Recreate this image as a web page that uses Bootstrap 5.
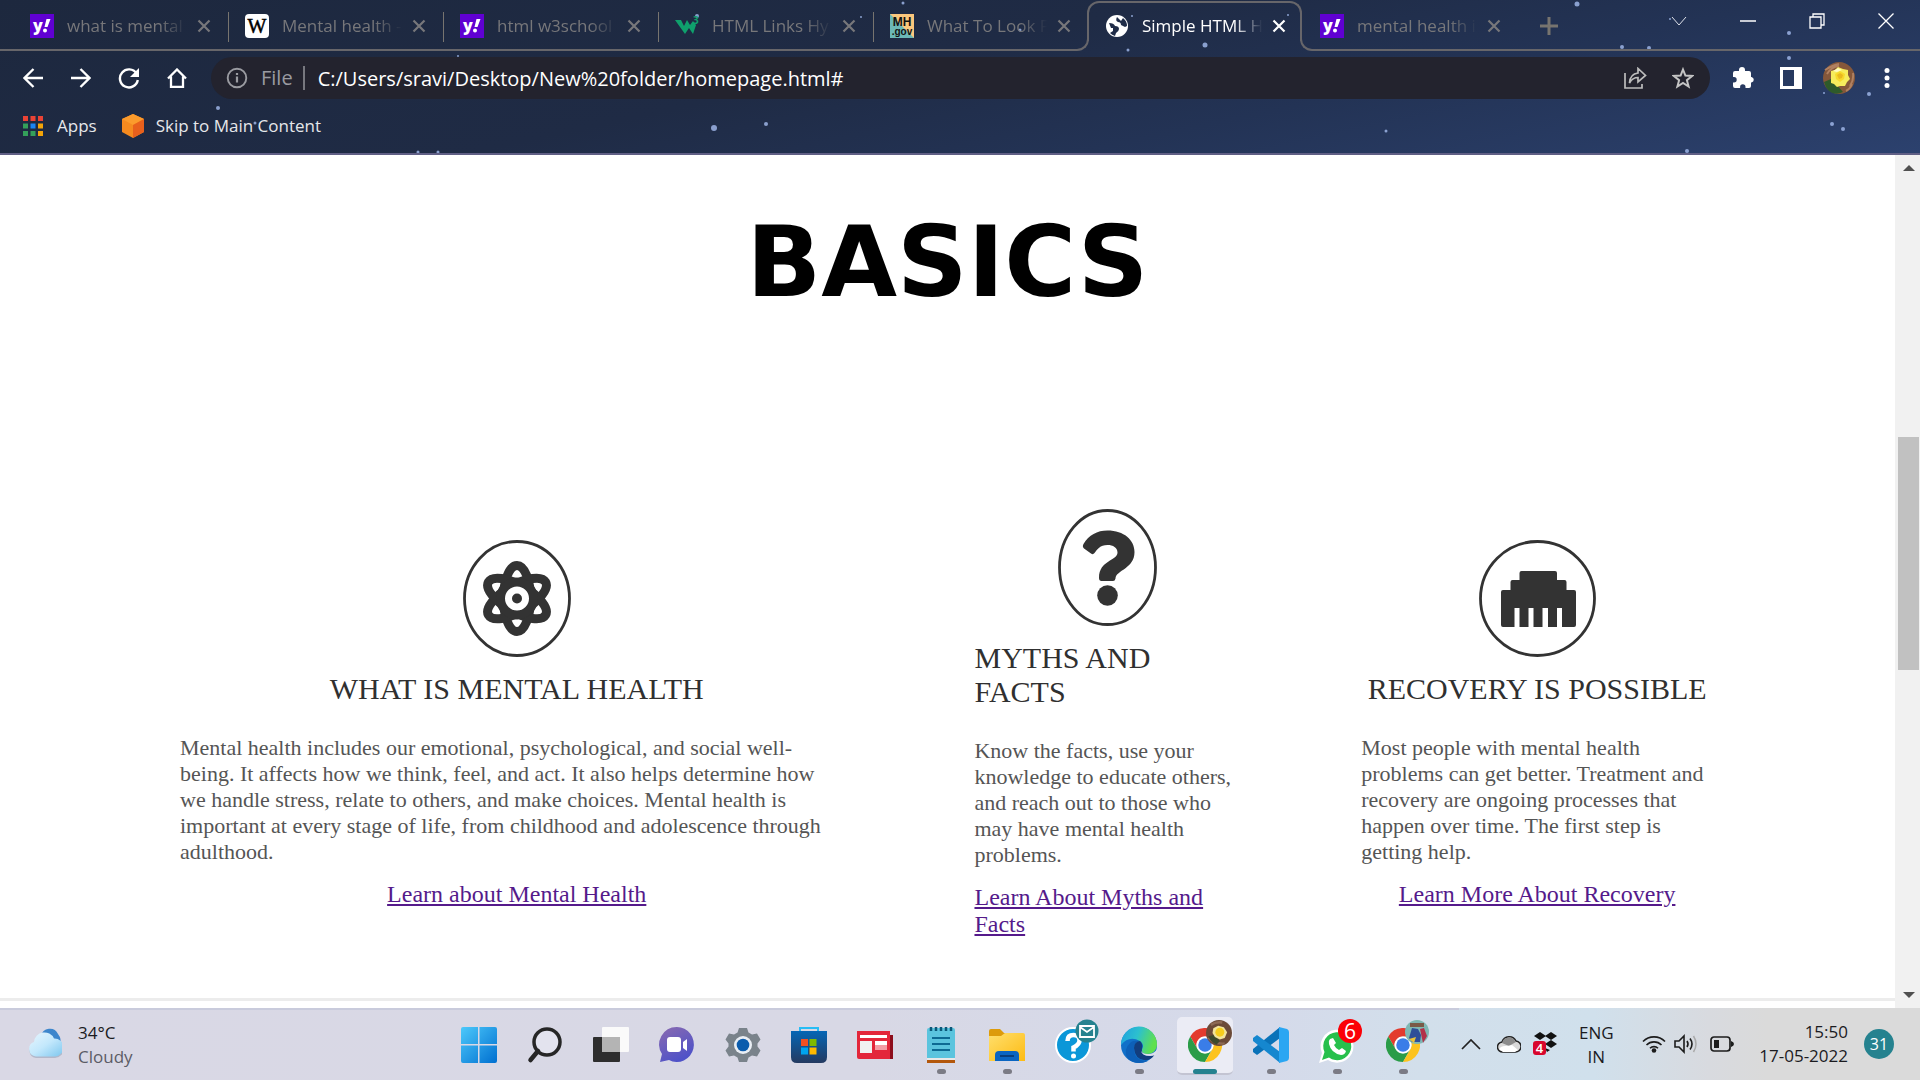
<!DOCTYPE html>
<html lang="en">
<head>
<meta charset="utf-8">
<meta name="viewport" content="width=device-width, initial-scale=1">
<title>Simple HTML HomePage</title>
<link href="https://cdn.jsdelivr.net/npm/bootstrap@5.3.0/dist/css/bootstrap.min.css" rel="stylesheet">
<style>
:root { --edge: #67666a; --ui: "Open Sans", "Noto Sans", sans-serif; }
body { font-family: var(--ui); background: #fff; }
svg { display: block; flex: none; }
button { background: none; border: 0; padding: 0; color: inherit; }
.screen { min-height: 100vh; }

/* browser header */
.browser-head { background: linear-gradient(168deg, #1d283e 0%, #1f2b45 45%, #233355 68%, #2c416e 100%); border-bottom: 2px solid #605f85; color: #fff; overflow: hidden; }
.stars { position: absolute; inset: 0; width: 100%; height: 100%; pointer-events: none; opacity: .85; }
.tab-strip { height: 51px; padding-left: 14px; position: relative; }
.tab-strip::before { content: ""; position: absolute; left: 0; bottom: 0; width: 14px; height: 2px; background: var(--edge); }
.tab-item { width: 215px; padding: 0 16px; position: relative; color: #77777a; background: linear-gradient(var(--edge), var(--edge)) left bottom / 100% 2px no-repeat; }
.tab-item.divided::after { content: ""; position: absolute; right: 0; top: 12px; height: 30px; width: 1px; background: #77746f; }
.tab-item.before-active { background-size: calc(100% - 14px) 2px; }
.tab-item.after-active { background-position: right bottom; background-size: calc(100% - 10px) 2px; }
.tab-item.active { color: #fff; background: none; }
.tab-item.active::before { content: ""; position: absolute; inset: 1px 2px 10px -2px; border: 2px solid var(--edge); border-bottom: 0; border-radius: 12px 12px 0 0; }
.foot { position: absolute; bottom: 0; width: 14px; height: 12px; border-bottom: 2px solid var(--edge); }
.foot-l { left: -14px; border-right: 2px solid var(--edge); border-bottom-right-radius: 12px; }
.foot-r { right: -10px; border-left: 2px solid var(--edge); border-bottom-left-radius: 12px; }
.tab-label { width: 123px; margin: 0 5px 0 13px; font-size: 17px; line-height: 24px; white-space: nowrap; overflow: hidden; color: inherit; text-decoration: none; -webkit-mask-image: linear-gradient(90deg, #000 75%, transparent 98%); mask-image: linear-gradient(90deg, #000 75%, transparent 98%); }
.strip-rest { background: linear-gradient(var(--edge), var(--edge)) left bottom / 100% 2px no-repeat; }
.new-tab { width: 60px; color: #77746f; }
.win-btn { width: 69px; height: 42px; }
.tool-row { height: 54px; padding: 6px 9px; }
.tool-btn { width: 48px; height: 42px; }
.omnibox { height: 42px; border-radius: 21px; background: #23232e; margin-left: 10px; margin-right: 9px; padding-left: 15px; padding-right: 3px; font-size: 20px; }
.omnibox label { color: #9a9ba1; margin-left: 13px; padding-right: 10px; line-height: 24px; border-right: 2px solid #77787f; }
.omnibox input { background: none; border: 0; outline: 0; color: #fff; padding: 1px 0 0 13px; min-width: 0; }
.mark-row { height: 48px; padding: 0 23px 6px; font-size: 17px; }
.mark-row a { color: #e6e7ea; text-decoration: none; gap: 14px; }
.mark-row a + a { gap: 11px; }

/* page */
.page-area { overflow: hidden; }
.page-title { font: 700 98px/117px Verdana, "DejaVu Sans", sans-serif; margin: 49px 0 0; color: #000; }
.topics { grid-template-columns: 674fr 266fr 352fr; column-gap: 121px; padding: 0 182px 0 180px; margin-top: 188px; font-family: "Liberation Serif", serif; }
.topic h2 { font-size: 30px; line-height: 34px; font-weight: 400; margin: 15px 0 29px; color: #303030; }
.topic p { font-size: 22px; line-height: 26px; margin: 0 0 16px; color: #555; width: 100%; }
.topic-wide p { padding-right: 14px; }
.topic a { font-size: 24px; line-height: 27px; color: #551a8b; text-underline-offset: 2px; }
.page-rule { height: 3px; background: #ececec; margin-bottom: 7px; }
.scroll-rail { flex: none; width: 25px; background: #f1f1f1; padding: 0 1px 0 3px; }
.rail-btn { height: 26px; width: 100%; }
.rail-thumb { background: #c1c1c1; height: 233px; }

/* taskbar */
.taskbar { height: 72px; grid-template-columns: 1fr auto 484px; background: linear-gradient(90deg, #d9d8e5 0%, #d8d8e5 45%, #d5daea 66%, #d2dfeb 74%, #d0e0ec 83%, #d8dadf 89%, #dadada 92%); color: #1b1b1f; font-size: 17px; line-height: 24px; position: relative; }
.taskbar::before { content: ""; position: absolute; top: 0; left: 0; width: 76%; height: 2px; background: #c9cbdc; }
.app-btn { width: 66px; height: 72px; position: relative; padding-top: 2px; }
.app-btn.open::after { content: ""; position: absolute; left: 29px; bottom: 6px; width: 9px; height: 5px; border-radius: 3px; background: #7b7b85; }
.app-btn.current::after { content: ""; position: absolute; left: 21px; bottom: 6px; width: 24px; height: 5px; border-radius: 3px; background: #25828f; }
.app-btn.current::before { content: ""; position: absolute; inset: 9px 5px 5px; border-radius: 5px; background: #ebecf5; border-bottom: 2px solid #c3c4d2; }
.app-btn svg { position: relative; overflow: visible; }
.date-dot { width: 30px; height: 30px; border-radius: 50%; background: #25828f; color: #fff; font-size: 16px; line-height: 30px; }
.tray { padding: 0 26px 0 25px; }
.two-line { padding-top: 2px; }
.tray-slot { width: 36px; }
.muted-line { color: #5c5c66; }
</style>
</head>
<body>
<svg width="0" height="0" class="position-absolute" aria-hidden="true">
  <defs>
    <linearGradient id="gWin" x1="0" y1="0" x2="1" y2="1"><stop offset="0" stop-color="#4cc9fb"/><stop offset="1" stop-color="#006fd0"/></linearGradient>
    <linearGradient id="gChat" x1="0" y1="0" x2="0.5" y2="1"><stop offset="0" stop-color="#8b6bb0"/><stop offset="1" stop-color="#4f52c8"/></linearGradient>
    <linearGradient id="gStore" x1="0" y1="0" x2="0" y2="1"><stop offset="0" stop-color="#0566b5"/><stop offset="1" stop-color="#243a61"/></linearGradient>
    <linearGradient id="gFold" x1="0" y1="0" x2="1" y2="1"><stop offset="0" stop-color="#ffdf6d"/><stop offset="1" stop-color="#fdbb13"/></linearGradient>
    <linearGradient id="gEdge" x1="0" y1="0" x2="1" y2="0.3"><stop offset="0" stop-color="#1e9fe0"/><stop offset="0.5" stop-color="#2cc0cf"/><stop offset="1" stop-color="#5fe04e"/></linearGradient>
    <linearGradient id="gCloud" x1="0" y1="0" x2="1" y2="1"><stop offset="0" stop-color="#e8f6fe"/><stop offset="0.5" stop-color="#c3e8fc"/><stop offset="1" stop-color="#7cc6ee"/></linearGradient>
    <symbol id="yahoo" viewBox="0 0 24 24"><rect width="24" height="24" fill="#6001d2"/><text x="3" y="17" font-family="Open Sans" font-weight="800" font-size="16" fill="#fff">y</text><path d="M16.500 5h4l-3 8h-3z" fill="#fff"/><circle cx="15" cy="16.500" r="2" fill="#fff"/></symbol>
    <symbol id="cross" viewBox="0 0 18 18"><path d="M3.500 3.500l11 11M14.500 3.500l-11 11" stroke="currentColor" stroke-width="2.200"/></symbol>
    <symbol id="chrome" viewBox="0 0 48 48"><path d="M24 12H44.800A24 24 0 0 0 3.200 12L13.600 30A12 12 0 0 1 24 12z" fill="#e33b2e"/><path d="M3.200 12A24 24 0 0 0 24 48L34.400 30A12 12 0 0 1 13.600 30z" fill="#2a9c48"/><path d="M24 48A24 24 0 0 0 44.800 12H24A12 12 0 0 1 34.400 30z" fill="#fcc31e"/><circle cx="24" cy="24" r="12" fill="#fff"/><circle cx="24" cy="24" r="9.500" fill="#3a7de8"/></symbol>
    <symbol id="rose" viewBox="0 0 32 32"><circle cx="16" cy="16" r="16" fill="#85573a"/><path d="M2 8q8-5 14-6M4 12q4-7 12-8M27 24q4-6 3-13M23 29q4-2 6-7" stroke="#b08060" stroke-width="2" fill="none"/><path d="M1 20l7-3 6 6 6 7q-8 4-14-1-4-4-5-9z" fill="#2e5a2a"/><path d="M8 9l4-1 3-3 5 2 5 1 0 5 2 4-3 3-2 4-5 0-3 1-3-3-3-1 0-5z" fill="#f6ec5c"/><path d="M12 12l5-3 5 3-1 5-4 3-4-3z" fill="#f7d92c"/><path d="M14 13l3-2 3 2-1 3-3 1z" fill="#e9b91f"/><path d="M10 9l5-3 4 2-5 2z" fill="#fffbc0"/></symbol>
    <symbol id="rosebadge" viewBox="0 0 32 32"><circle cx="16" cy="16" r="16" fill="#6b4a38"/><path d="M3 22q8 8 20 7M6 6q6-4 14-3" stroke="#8d6a55" stroke-width="3" fill="none"/><path d="M3 20l8-2 6 8-4 4q-8-3-10-10z" fill="#3d4a2c"/><path d="M9 10l6-3 7 2 4 6-3 7-6 2-6-3-3-5z" fill="#f1e49a"/><circle cx="17" cy="15" r="5.500" fill="#f4cd1d"/></symbol>
  </defs>
</svg>

<div class="screen d-flex flex-column">
  <header class="browser-head position-relative">
    <svg class="stars" viewBox="0 0 1920 153" preserveAspectRatio="xMidYMin slice" fill="#9db4e6" aria-hidden="true">
      <circle cx="714" cy="128" r="3"/><circle cx="766" cy="124" r="2"/><circle cx="218" cy="108" r="2"/><circle cx="255" cy="123" r="1.500"/><circle cx="418" cy="152" r="1.500"/><circle cx="438" cy="152" r="1.500"/><circle cx="458" cy="56" r="1"/><circle cx="697" cy="16" r="2"/><circle cx="861" cy="17" r="1"/><circle cx="903" cy="3" r="1.500"/><circle cx="1020" cy="30" r="1.500"/><circle cx="1132" cy="16" r="1"/><circle cx="1128" cy="50" r="1.500"/><circle cx="1205" cy="45" r="2.500"/><circle cx="1288" cy="15" r="1"/><circle cx="1386" cy="131" r="1.500"/><circle cx="1577" cy="4" r="2.500"/><circle cx="1622" cy="47" r="2"/><circle cx="1649" cy="48" r="2"/><circle cx="1670" cy="19" r="1"/><circle cx="1687" cy="151" r="2"/><circle cx="1789" cy="33" r="2"/><circle cx="1789" cy="58" r="2"/><circle cx="1824" cy="93" r="1"/><circle cx="1869" cy="94" r="2"/><circle cx="1832" cy="124" r="2"/><circle cx="1843" cy="129" r="2"/>
    </svg>

    <nav class="tab-strip d-flex" aria-label="Tabs">
      <div class="tab-item divided d-flex align-items-center"><svg width="24" height="24"><use href="#yahoo"/></svg><a class="tab-label" href="#">what is mental</a><button type="button" aria-label="Close tab"><svg width="18" height="18"><use href="#cross"/></svg></button></div>
      <div class="tab-item divided d-flex align-items-center"><svg width="24" height="24" viewBox="0 0 24 24"><rect width="24" height="24" rx="4" fill="#fff"/><text x="12" y="19" text-anchor="middle" font-family="Liberation Serif" font-size="20" fill="#000" stroke="#000" stroke-width="0.500">W</text></svg><a class="tab-label" href="#">Mental health -</a><button type="button" aria-label="Close tab"><svg width="18" height="18"><use href="#cross"/></svg></button></div>
      <div class="tab-item divided d-flex align-items-center"><svg width="24" height="24"><use href="#yahoo"/></svg><a class="tab-label" href="#">html w3school</a><button type="button" aria-label="Close tab"><svg width="18" height="18"><use href="#cross"/></svg></button></div>
      <div class="tab-item divided d-flex align-items-center"><svg width="24" height="24" viewBox="0 0 24 24"><path d="M0 6h6l3 6 3-6 3 5 3-4 3 4-3 9-4-6-4 6z" fill="#0fa06c"/><text x="18" y="10" font-family="Open Sans" font-weight="700" font-size="10" fill="#0fa06c">3</text></svg><a class="tab-label" href="#">HTML Links Hy</a><button type="button" aria-label="Close tab"><svg width="18" height="18"><use href="#cross"/></svg></button></div>
      <div class="tab-item before-active d-flex align-items-center"><svg width="24" height="24" viewBox="0 0 24 24"><rect width="24" height="24" fill="#fbc77d"/><path d="M0 0v24h24z" fill="#6cb9b7"/><text x="12" y="12" text-anchor="middle" font-family="Liberation Sans" font-weight="700" font-size="12" fill="#111">MH</text><text x="12" y="21" text-anchor="middle" font-family="Liberation Sans" font-weight="700" font-size="10" fill="#111">.gov</text></svg><a class="tab-label" href="#">What To Look F</a><button type="button" aria-label="Close tab"><svg width="18" height="18"><use href="#cross"/></svg></button></div>
      <div class="tab-item active d-flex align-items-center"><span class="foot foot-l"></span><span class="foot foot-r"></span><svg width="24" height="24" viewBox="0 0 24 24"><circle cx="12" cy="12" r="11" fill="#fff"/><path d="M4 9q5 0 6 3 4 0 4 3 0 2-3 4l-1 3q-3-1-5-3l3-2v-3H6zM12 3q-2 4 1 5 3 0 3 3l4 2 2-1q0-5-4-8l-2 3z" fill="#1f2c48"/></svg><a class="tab-label" href="#" aria-current="page">Simple HTML H</a><button type="button" aria-label="Close tab"><svg width="18" height="18"><use href="#cross"/></svg></button></div>
      <div class="tab-item after-active d-flex align-items-center"><svg width="24" height="24"><use href="#yahoo"/></svg><a class="tab-label" href="#">mental health i</a><button type="button" aria-label="Close tab"><svg width="18" height="18"><use href="#cross"/></svg></button></div>
      <div class="strip-rest d-flex flex-grow-1 position-relative">
        <button type="button" class="new-tab d-flex align-items-center justify-content-center" aria-label="New tab"><svg width="18" height="18" viewBox="0 0 18 18"><path d="M9 0v18M0 9h18" stroke="currentColor" stroke-width="3"/></svg></button>
        <div class="d-flex ms-auto">
          <button type="button" class="win-btn d-flex align-items-center justify-content-center" aria-label="Search tabs"><svg width="16" height="10" viewBox="0 0 16 10"><path d="M1 1l7 8 7-8" fill="none" stroke="#dfe2ea" stroke-width="1"/></svg></button>
          <button type="button" class="win-btn d-flex align-items-center justify-content-center" aria-label="Minimize"><svg width="16" height="2"><path d="M0 1h16" stroke="#fff" stroke-width="1.500"/></svg></button>
          <button type="button" class="win-btn d-flex align-items-center justify-content-center" aria-label="Restore"><svg width="16" height="16" viewBox="0 0 16 16"><path d="M1 4h11v11H1zM4 4V1h11v11h-3" fill="none" stroke="#fff" stroke-width="1.300"/></svg></button>
          <button type="button" class="win-btn d-flex align-items-center justify-content-center" aria-label="Close"><svg width="16" height="16" viewBox="0 0 16 16"><path d="M.5.5l15 15M15.500.5l-15 15" stroke="#fff" stroke-width="1.300"/></svg></button>
        </div>
      </div>
    </nav>

    <div class="tool-row d-flex align-items-center position-relative">
      <button type="button" class="tool-btn d-flex align-items-center justify-content-center" aria-label="Back"><svg width="20" height="20" viewBox="0 0 20 20"><path d="M20 10H2M10.500 1L1.500 10l9 9" fill="none" stroke="#fff" stroke-width="2.300"/></svg></button>
      <button type="button" class="tool-btn d-flex align-items-center justify-content-center" aria-label="Forward"><svg width="20" height="20" viewBox="0 0 20 20"><path d="M0 10h18M9.500 1l9 9-9 9" fill="none" stroke="#fff" stroke-width="2.300"/></svg></button>
      <button type="button" class="tool-btn d-flex align-items-center justify-content-center" aria-label="Reload"><svg width="22" height="22" viewBox="0 0 22 22"><path d="M18.500 6.500A9 9 0 1 0 19.800 13" fill="none" stroke="#fff" stroke-width="2.400"/><path d="M21 1v9h-9z" fill="#fff"/></svg></button>
      <button type="button" class="tool-btn d-flex align-items-center justify-content-center" aria-label="Home"><svg width="20" height="20" viewBox="0 0 20 20"><path d="M1 10.500L10 1.500l9 9M4 8.500V19h12V8.500" fill="none" stroke="#fff" stroke-width="2.300"/></svg></button>
      <div class="omnibox d-flex align-items-center flex-grow-1">
        <svg width="22" height="22" viewBox="0 0 22 22"><circle cx="11" cy="11" r="9.300" fill="none" stroke="#9a9ba1" stroke-width="1.900"/><path d="M11 9.500v6M11 6v2" stroke="#9a9ba1" stroke-width="2.200"/></svg>
        <label for="address">File</label>
        <input id="address" class="flex-grow-1" type="text" value="C:/Users/sravi/Desktop/New%20folder/homepage.html#">
        <button type="button" class="tool-btn d-flex align-items-center justify-content-center" aria-label="Share"><svg width="23" height="22" viewBox="0 0 23 22"><path d="M1 6v15h17v-4M5.500 16Q6 7 14 6V1.500l7.500 7L14 15v-4.500Q8.500 10.500 5.500 16z" fill="none" stroke="#bdbdbd" stroke-width="1.700"/></svg></button>
        <button type="button" class="tool-btn d-flex align-items-center justify-content-center" aria-label="Bookmark"><svg width="22" height="22" viewBox="0 0 22 22"><path d="M11 2.500l2.400 6.100 6.600.4-5.100 4.200 1.700 6.400L11 16l-5.600 3.600 1.700-6.400L2 9l6.600-.4z" fill="none" stroke="#c4c4c4" stroke-width="2"/></svg></button>
      </div>
      <button type="button" class="tool-btn d-flex align-items-center justify-content-center" aria-label="Extensions"><svg width="22" height="22" viewBox="0 0 22 22"><path d="M1 6q0-2 2-2h4V3a3 3 0 0 1 6 0v1h4q2 0 2 2v4h.5a2.800 2.800 0 0 1 0 5.500H19V19q0 2-2 2h-3.500v-1a2.700 2.700 0 0 0-5.400 0v1H3q-2 0-2-2v-3.500h1a2.700 2.700 0 0 0 0-5.400H1z" fill="#fff"/></svg></button>
      <button type="button" class="tool-btn d-flex align-items-center justify-content-center" aria-label="Side panel"><svg width="22" height="22" viewBox="0 0 22 22"><path d="M0 0h22v22H0zM3 3v16h11V3z" fill="#fff" fill-rule="evenodd"/></svg></button>
      <button type="button" class="tool-btn d-flex align-items-center justify-content-center" aria-label="Profile"><svg width="32" height="32"><use href="#rose"/></svg></button>
      <button type="button" class="tool-btn d-flex align-items-center justify-content-center" aria-label="Menu"><svg width="6" height="20" viewBox="0 0 6 20" fill="#fff"><circle cx="3" cy="2.500" r="2.500"/><circle cx="3" cy="10" r="2.500"/><circle cx="3" cy="17.500" r="2.500"/></svg></button>
    </div>

    <nav class="mark-row d-flex align-items-center position-relative" aria-label="Bookmarks">
      <a class="d-flex align-items-center" href="#"><svg width="20" height="20" viewBox="0 0 20 20"><path d="M0 0h5v5H0zM7.500 0h5v5h-5zM15 0h5v5h-5z" fill="#ea4335"/><path d="M0 7.500h5v5H0zM0 15h5v5H0zM7.500 15h5v5h-5z" fill="#34a05a"/><path d="M7.500 7.500h5v5h-5z" fill="#1a84f4"/><path d="M15 7.500h5v5h-5zM15 15h5v5h-5z" fill="#f3a408"/></svg>Apps</a>
      <a class="d-flex align-items-center ms-4" href="#"><svg width="24" height="24" viewBox="0 0 24 24"><path d="M12 0l11 5v13l-11 6-11-6V5z" fill="#f58a1f"/><path d="M1 5l11-5 11 5-11 6z" fill="#fb9b2c"/><path d="M12 11l11-6v13l-11 6z" fill="#e8601c"/></svg>Skip to Main Content</a>
    </nav>
  </header>

  <div class="d-flex flex-grow-1">
    <main class="page-area flex-grow-1 d-flex flex-column">
      <h1 class="page-title text-center">BASICS</h1>
      <section class="topics d-grid align-items-center">
        <article class="topic topic-wide d-flex flex-column align-items-center">
          <svg width="108" height="117" viewBox="0 0 108 117"><ellipse cx="54" cy="58.500" rx="52.500" ry="57" fill="none" stroke="#333" stroke-width="2.800"/><g fill="none" stroke="#333" stroke-width="9"><ellipse cx="54" cy="58.500" rx="13.500" ry="33"/><ellipse cx="54" cy="58.500" rx="13.500" ry="33" transform="rotate(60 54 58.500)"/><ellipse cx="54" cy="58.500" rx="13.500" ry="33" transform="rotate(120 54 58.500)"/></g><circle cx="54" cy="58.500" r="16.500" fill="#fff" stroke="#333" stroke-width="9"/><circle cx="54" cy="58.500" r="5" fill="#333"/></svg>
          <h2>WHAT IS MENTAL HEALTH</h2>
          <p>Mental health includes our emotional, psychological, and social well-being. It affects how we think, feel, and act. It also helps determine how we handle stress, relate to others, and make choices. Mental health is important at every stage of life, from childhood and adolescence through adulthood.</p>
          <a href="#">Learn about Mental Health</a>
        </article>
        <article class="topic d-flex flex-column align-items-center">
          <svg width="99" height="117" viewBox="0 0 99 117"><ellipse cx="49.500" cy="58.500" rx="48" ry="57" fill="none" stroke="#333" stroke-width="2.800"/><path d="M25.500 35C31 26 39 21.500 49.500 21.500C66 21.500 76.500 31 76.500 43C76.500 60 58 61 57.500 69.500Q57 72 55 72H43.500Q41 72 41 69C41 51 59.500 52 59.500 43.500C59.500 38.500 55 36 49.500 36C42 36 39 40.500 36.500 44Q35 46 33 44.500L26 39.500Q24 37.500 25.500 35Z" fill="#333"/><circle cx="49.500" cy="86.500" r="10.300" fill="#333"/></svg>
          <h2 class="align-self-start">MYTHS AND FACTS</h2>
          <p>Know the facts, use your knowledge to educate others, and reach out to those who may have mental health problems.</p>
          <a href="#">Learn About Myths and Facts</a>
        </article>
        <article class="topic d-flex flex-column align-items-center">
          <svg width="117" height="117" viewBox="0 0 117 117"><circle cx="58.500" cy="58.500" r="57" fill="none" stroke="#333" stroke-width="2.800"/><path d="M24 50H31.500V42Q31.500 40 33.500 40H40.500V33Q40.500 31 42.500 31H76Q78 31 78 33V40H85.500Q87.500 40 87.500 42V50H95Q97 50 97 52V85Q97 87 95 87H83V68H78V87H69V68H63.500V87H54.500V68H49.500V87H40.500V68H35.500V87H24Q22 87 22 85V52Q22 50 24 50Z" fill="#333"/></svg>
          <h2>RECOVERY IS POSSIBLE</h2>
          <p>Most people with mental health problems can get better. Treatment and recovery are ongoing processes that happen over time. The first step is getting help.</p>
          <a href="#">Learn More About Recovery</a>
        </article>
      </section>
      <div class="page-rule mt-auto"></div>
    </main>
    <div class="scroll-rail d-flex flex-column justify-content-between align-items-center" aria-hidden="true">
      <div class="rail-btn d-flex align-items-center justify-content-center"><svg width="12" height="6"><path d="M6 0l6 6H0z" fill="#505050"/></svg></div>
      <div class="flex-grow-1 d-flex flex-column w-100"><div style="flex: 256 0 0"></div><div class="rail-thumb"></div><div style="flex: 312 0 0"></div></div>
      <div class="rail-btn d-flex align-items-center justify-content-center"><svg width="12" height="6"><path d="M0 0h12L6 6z" fill="#505050"/></svg></div>
    </div>
  </div>

  <footer class="taskbar d-grid">
    <div class="d-flex align-items-center ps-4">
      <svg class="ms-1 me-1" width="34" height="34" viewBox="0 0 34 34"><path d="M13 9a9 9 0 0 1 17-2q4 5 2 11l-10 2z" fill="#3d86cc"/><path d="M8 31a8 8 0 0 1-1-15.500A10 10 0 0 1 26 12a8 8 0 0 1 1 19z" fill="#9aa4b8" opacity=".6"/><path d="M8 29.500A7.500 7.500 0 0 1 6 15a10.500 10.500 0 0 1 20-3.500A9 9 0 0 1 27 29.500z" fill="url(#gCloud)"/></svg>
      <div class="two-line ms-2 ps-1"><div>34°C</div><div class="muted-line">Cloudy</div></div>
    </div>
    <div class="d-flex">
      <button type="button" class="app-btn d-flex align-items-center justify-content-center" aria-label="Start"><svg width="36" height="36" viewBox="0 0 36 36" fill="url(#gWin)"><path d="M2 0H17V17H0V2Q0 0 2 0zM18.500 0H34Q36 0 36 2V17H18.500zM0 18.500H17V36H2Q0 36 0 34zM18.500 18.500H36V34Q36 36 34 36H18.500z"/></svg></button>
      <button type="button" class="app-btn d-flex align-items-center justify-content-center" aria-label="Search"><svg width="34" height="36" viewBox="0 0 34 36"><circle cx="19" cy="15" r="13" fill="#e3e3ee" stroke="#262626" stroke-width="3.500"/><path d="M10 24L2.500 33" stroke="#262626" stroke-width="4.500" stroke-linecap="round"/></svg></button>
      <button type="button" class="app-btn d-flex align-items-center justify-content-center" aria-label="Task view"><svg width="36" height="36" viewBox="0 0 36 36"><rect y="10" width="27" height="25" rx="1" fill="#2e2e2e"/><rect x="9" width="27" height="25" rx="1" fill="#fafafa"/><path d="M9 10h18v15H9z" fill="#b4b4b4"/></svg></button>
      <button type="button" class="app-btn d-flex align-items-center justify-content-center" aria-label="Chat"><svg width="36" height="36" viewBox="0 0 36 36"><path d="M18 0a17 17.500 0 1 1-8 33l-9 2 2-8A17.500 17.500 0 0 1 18 0z" fill="url(#gChat)"/><rect x="8" y="10" width="14" height="15" rx="3" fill="#fff"/><path d="M24 15l4-3v12l-4-3z" fill="#fff"/></svg></button>
      <button type="button" class="app-btn d-flex align-items-center justify-content-center" aria-label="Settings"><svg width="36" height="36" viewBox="0 0 36 36"><path d="M14 1h8l1.500 4.500 3.500 2 5-1 3.500 6-3 4v3l3 4-3.500 6-5-1-3.500 2L22 35h-8l-1.500-4.500-3.500-2-5 1-3.500-6 3-4v-3l-3-4 3.500-6 5 1 3.500-2z" fill="#7a838b"/><circle cx="18" cy="18" r="9" fill="#e9eef4"/><circle cx="18" cy="18" r="6.300" fill="#0a5cad"/></svg></button>
      <button type="button" class="app-btn d-flex align-items-center justify-content-center" aria-label="Store"><svg width="36" height="36" viewBox="0 0 36 36"><path d="M9 6V1h18v5" fill="none" stroke="#27bdf5" stroke-width="2"/><path d="M0 4h36v26q0 6-6 6H6q-6 0-6-6z" fill="url(#gStore)"/><path d="M10 12h7v7h-7z" fill="#f25022"/><path d="M18.500 12h7v7h-7z" fill="#7fba00"/><path d="M10 20.500h7v7h-7z" fill="#00a4ef"/><path d="M18.500 20.500h7v7h-7z" fill="#ffb900"/></svg></button>
      <button type="button" class="app-btn d-flex align-items-center justify-content-center" aria-label="News"><svg width="36" height="36" viewBox="0 0 36 36"><path d="M32 8h4v24h-4z" fill="#8d0d1c"/><path d="M0 4h33v28H2q-2 0-2-2z" fill="#e3263a"/><path d="M3 8h27v3H3z" fill="#fff"/><path d="M3 14h12v12H3z" fill="#f1f1f1"/><path d="M18 14h12v4H18z" fill="#fff"/><path d="M18 18h12v5H18z" fill="#f49ca5"/></svg></button>
      <button type="button" class="app-btn open d-flex align-items-center justify-content-center" aria-label="Notepad"><svg width="30" height="36" viewBox="0 0 30 36"><path d="M1 33h28v3H1z" fill="#b3570c"/><path d="M1 30h28v3H1z" fill="#e8e8e8"/><path d="M1 3q0-2 2-2h24q2 0 2 2v28H1z" fill="#5bc4de"/><path d="M6 11h18M6 17h18M6 23h18" stroke="#0d6a93" stroke-width="2"/><path d="M5 0v4M10 0v4M15 0v4M20 0v4M25 0v4" stroke="#0c5879" stroke-width="2.500"/></svg></button>
      <button type="button" class="app-btn open d-flex align-items-center justify-content-center" aria-label="File Explorer"><svg width="36" height="34" viewBox="0 0 36 34"><path d="M0 3q0-2 2-2h9l4 4H34v6H0z" fill="#dd9b0b"/><path d="M0 8h12l4-3h18q2 0 2 2v26H0z" fill="url(#gFold)"/><path d="M6 33v-6q0-4 4-4h16q4 0 4 4v6z" fill="#0a65c2"/><path d="M11 28h14" stroke="#083e7c" stroke-width="2"/></svg></button>
      <button type="button" class="app-btn d-flex align-items-center justify-content-center" aria-label="Get Help"><svg width="36" height="36" viewBox="0 0 36 36"><circle cx="18" cy="18" r="17" fill="#0b97d8" stroke="#fff" stroke-width="2"/><path d="M12.500 14q0-6 6-6t6 5.500q0 4-6 7v4" fill="none" stroke="#fff" stroke-width="4.500"/><circle cx="18.500" cy="29" r="2.500" fill="#fff"/><circle cx="32" cy="4" r="11.500" fill="#25828f"/><path d="M25 -1h14v11H25zM25 0l7 5 7-5" fill="none" stroke="#fff" stroke-width="1.800"/></svg></button>
      <button type="button" class="app-btn open d-flex align-items-center justify-content-center" aria-label="Edge"><svg width="36" height="36" viewBox="0 0 36 36"><circle cx="18" cy="18" r="18" fill="#1170c9"/><path d="M0 18A18 18 0 0 1 36 17C36 24 31 27 26 27Q20 27 21 22.500Q24 18 19 14Q8 8 0 18z" fill="url(#gEdge)"/><path d="M13 20q-1 14 14 14-11 5-20-2-6-9 3-17 3-2 8-1-4 1-5 6z" fill="#0d60b8"/><path d="M13 21q0-6 6-7 3 3 2 7-1 3 1 6 5 4 12 0-4 7-11 6-9-1-10-12z" fill="#123e7e"/><path d="M20 24q1 5 9 5 3 0 6-1.500 1-3 1-5-4 5-10 4.500-4 0-6-3z" fill="#dddfea"/></svg></button>
      <button type="button" class="app-btn current d-flex align-items-center justify-content-center" aria-label="Chrome"><svg width="34" height="34" viewBox="0 0 34 34"><use href="#chrome" width="34" height="34"/><use href="#rosebadge" x="18" y="-8" width="26" height="26"/></svg></button>
      <button type="button" class="app-btn open d-flex align-items-center justify-content-center" aria-label="Visual Studio Code"><svg width="36" height="36" viewBox="0 0 36 36"><path d="M27 0v11L4 28l-4-3v-3z" fill="#0a72b8"/><path d="M0 14v-3l4-3 23 17v11z" fill="#1587cf"/><path d="M26 0l8 2q2 1 2 3v26q0 2-2 3l-8 2z" fill="#2aa6f2"/></svg></button>
      <button type="button" class="app-btn open d-flex align-items-center justify-content-center" aria-label="WhatsApp"><svg width="36" height="36" viewBox="0 0 36 36"><path d="M0 36l3-10A16.500 16.500 0 1 1 9 33z" fill="#fff"/><path d="M3 33l2.500-8A14 14 0 1 1 10 30.500z" fill="#27c04c"/><path d="M11 12l3-1 3 5-2 2q2 4 5 5l3-2 4 3q-1 4-5 4-10-2-12-11-1-3 1-5z" fill="#fff"/><circle cx="31" cy="4" r="12" fill="#fb0007"/><text x="31" y="12" text-anchor="middle" font-family="Open Sans" font-size="21" fill="#fff">6</text></svg></button>
      <button type="button" class="app-btn open d-flex align-items-center justify-content-center" aria-label="Chrome, second profile"><svg width="34" height="34" viewBox="0 0 34 34"><use href="#chrome" width="34" height="34"/><circle cx="31" cy="4" r="12" fill="#7fb8b4"/><path d="M24 -5h14v4H24z" fill="#7a5a48"/><path d="M26 0l6 1 3 6-1 7h-8l-3-4z" fill="#2e4f98"/><path d="M34 1l4-1 3 8-4 7z" fill="#b2324a"/><path d="M23 11l7-2-2 6z" fill="#e9c23a"/></svg></button>
    </div>
    <div class="tray d-flex align-items-center">
      <div class="tray-slot d-flex"><svg width="20" height="11" viewBox="0 0 20 11"><path d="M1 10l9-9 9 9" fill="none" stroke="#222" stroke-width="1.700"/></svg></div>
      <div class="tray-slot d-flex"><svg width="24" height="18" viewBox="0 0 24 18"><path d="M6 17a5 5 0 0 1-1-10A7.500 7.500 0 0 1 19 6a5.500 5.500 0 0 1-1 11z" fill="#d9d9d9" stroke="#222" stroke-width="1.500"/><path d="M5 8a7 7 0 0 1 13-2l1 1-7 4z" fill="#8b8b8b"/><path d="M2 14q2-3 6-3t7-1l6 5-3 2H6z" fill="#fff"/></svg></div>
      <div class="d-flex"><svg width="26" height="24" viewBox="0 0 26 24"><path d="M7 0l6 4-6 4-6-4zM18 0l6 4-6 4-6-4zM18 8l6 4-6 4-6-4zM12 16l5 2-3 2z" fill="#111"/><rect x="0" y="9" width="13" height="14" rx="3" fill="#d8062c"/><text x="6.500" y="21" text-anchor="middle" font-family="Open Sans" font-weight="600" font-size="13" fill="#fff">4</text></svg></div>
      <div class="two-line text-center ms-3 px-1"><div>ENG</div><div>IN</div></div>
      <svg class="ms-4" width="24" height="18" viewBox="0 0 24 18"><g fill="none" stroke="#1c1c1c" stroke-width="1.600"><path d="M1 6.500a15.500 15.500 0 0 1 22 0M4.500 10a10.500 10.500 0 0 1 15 0M8 13.300a5.600 5.600 0 0 1 8 0"/></g><circle cx="12" cy="15.500" r="2.300" fill="#1c1c1c"/></svg>
      <svg class="ms-2 me-1" width="24" height="20" viewBox="0 0 24 20"><path d="M1 7h4l5-5v16l-5-5H1z" fill="none" stroke="#1c1c1c" stroke-width="1.600"/><path d="M13 7q2 3 0 6M16 4.500q4 5.500 0 11" fill="none" stroke="#1c1c1c" stroke-width="1.600"/><path d="M19.500 2q5 8 0 16" fill="none" stroke="#aaa" stroke-width="1.500"/></svg>
      <svg class="ms-2" width="24" height="16" viewBox="0 0 24 16"><rect x="1" y="1" width="19" height="14" rx="3" fill="none" stroke="#1c1c1c" stroke-width="1.700"/><path d="M4 4h5v8H4zM21 5q3 1 3 3t-3 3z" fill="#1c1c1c"/></svg>
      <div class="text-end ms-auto me-3"><div>15:50</div><div>17-05-2022</div></div>
      <div class="date-dot text-center">31</div>
    </div>
  </footer>
</div>
<script src="https://cdn.jsdelivr.net/npm/bootstrap@5.3.0/dist/js/bootstrap.bundle.min.js"></script>
</body>
</html>
